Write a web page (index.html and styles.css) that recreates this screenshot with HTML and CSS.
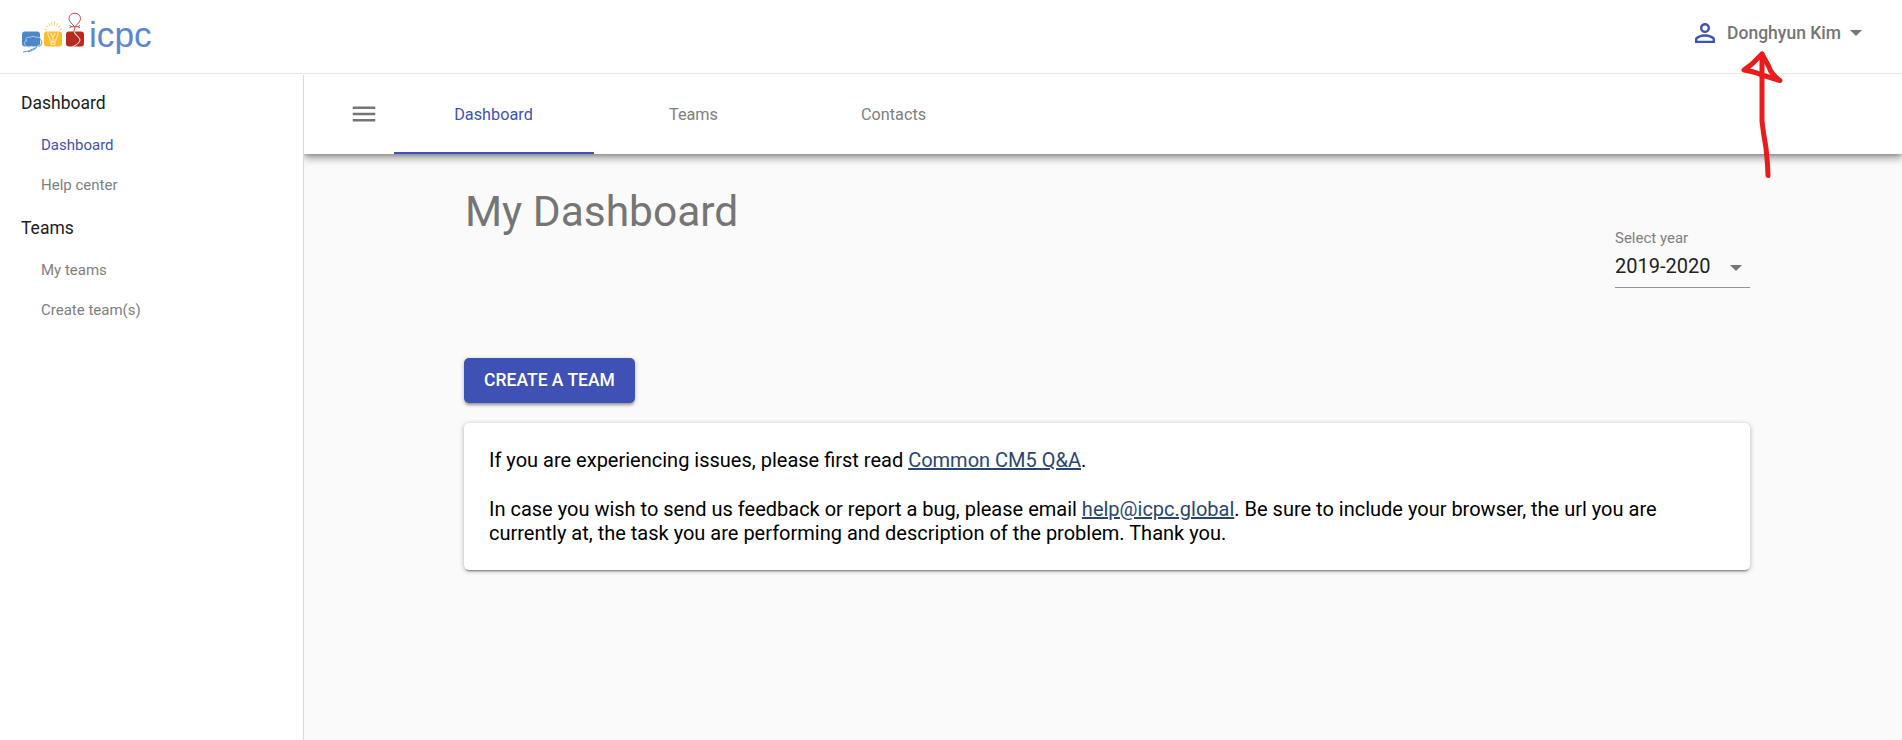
FILE: index.html
```html
<!DOCTYPE html>
<html lang="en">
<head>
<meta charset="utf-8">
<title>My Dashboard</title>
<link rel="stylesheet" href="styles.css">
</head>
<body>
<header class="topbar">
  <svg class="logo" width="140" height="56" viewBox="0 0 140 56" fill="none">
    <rect x="2" y="25.500" width="18" height="15" rx="3" fill="#4b86c6"/>
    <path d="M6 40C3.500 38 4 35 6.500 35C5 32 7.500 30.500 10 31.500C11 30 15 30 16 31.500C19 30.500 21.500 32 20.500 34C22.500 36 21 39.500 18 39.500C17 42 13 41.500 12 40C10 41.500 7 41.500 6 40Z" stroke="#b9d6f2" stroke-width=".9"/>
    <path d="M20.500 33.500C23 36 21.500 40 18.500 40.500M16 42C13 43.500 11 43 9.500 44.500C7.500 46 5 45 3 46.300M17 41C14 44 11 45 8 46" stroke="#5790cc" stroke-width="1"/>
    <rect x="24" y="25.500" width="18" height="15" rx="3" fill="#fdbb30"/>
    <path d="M31 35.500C30.500 32.500 27.500 31 27.800 26M35 35.500C35.500 32.500 38.500 31 38.200 26M31 36h4v2.500h-4zM30.500 27l2.500 4 2.500-4M33 31v6" stroke="#ffe9b4" stroke-width="1.100"/>
    <path d="M24.500 23l2.500 1.200M26 19.500l2.500 2M28.500 17l1.700 3M31.300 15.500l.7 4M34.700 15.500l-.5 4M38 17l-1.500 3M40.500 19.500l-2.400 2M42 23l-2.500 1.200" stroke="#fbcf78" stroke-width="1"/>
    <rect x="46" y="25.500" width="18" height="15" rx="3" fill="#b52b1d"/>
    <path d="M54.500 20.500C51 17 49 15 49 12.500C49 5.500 60.500 5.500 60.500 12.500C60.500 15 58.500 17 55 20.500L54 25.500M49.500 19.500l2 1.200-2 1.200M60 19.500l-2 1.200 2 1.200M51.500 20.700h6.500" stroke="#bd4840" stroke-width="1"/>
    <path d="M54 25.500C55 29.500 60 31 60 34C59.500 38 55.500 39.500 52 41" stroke="#f3cbc6" stroke-width="1.100"/>
    <text class="logo-text" x="69" y="41.300" textLength="62.500" lengthAdjust="spacingAndGlyphs">icpc</text>
  </svg>
  <div class="user">
    <svg width="30" height="30" viewBox="0 0 24 24" fill="#3f51b5"><path d="M12 5.900a2.100 2.100 0 1 1 0 4.200 2.100 2.100 0 0 1 0-4.200m0 9c2.970 0 6.100 1.460 6.100 2.100v1.100H5.900V17c0-.64 3.130-2.100 6.100-2.100M12 4C9.790 4 8 5.790 8 8s1.790 4 4 4 4-1.790 4-4-1.790-4-4-4zm0 9c-2.670 0-8 1.340-8 4v3h16v-3c0-2.660-5.330-4-8-4z"/></svg>
    <span class="user-name">Donghyun Kim</span>
    <span class="caret"></span>
  </div>
</header>
<div class="shell">
  <nav class="sidebar">
    <div class="group">Dashboard</div>
    <a class="item active">Dashboard</a>
    <a class="item">Help center</a>
    <div class="group">Teams</div>
    <a class="item">My teams</a>
    <a class="item">Create team(s)</a>
  </nav>
  <div class="content">
    <div class="tabs">
      <svg class="menu" width="30" height="30" viewBox="0 0 24 24" fill="#757575"><path d="M3 18h18v-2H3v2zm0-5h18v-2H3v2zm0-7v2h18V6H3z"/></svg>
      <a class="tab selected">Dashboard</a>
      <a class="tab">Teams</a>
      <a class="tab">Contacts</a>
    </div>
    <main class="page">
      <div class="heading">
        <h1 class="title">My Dashboard</h1>
        <div class="year">
          <span class="year-label">Select year</span>
          <div class="year-value"><span>2019-2020</span><span class="caret"></span></div>
        </div>
      </div>
      <button class="create">CREATE A TEAM</button>
      <section class="card">
        <p>If you are experiencing issues, please first read <a class="link">Common CM5 Q&amp;A</a>.</p>
        <p>In case you wish to send us feedback or report a bug, please email <a class="link">help@icpc.global</a>. Be sure to include your browser, the url you are<br>currently at, the task you are performing and description of the problem. Thank you.</p>
      </section>
    </main>
  </div>
</div>
<svg class="pointer" width="60" height="140" viewBox="0 0 60 140" fill="none" stroke="#e81c1c" stroke-width="5" stroke-linecap="round" stroke-linejoin="round">
  <path d="M28 125.500L27.500 114L26 98L23.500 83L22 71V4"/>
  <path d="M22 4L12 14L4 20Q12 21 22 25L40 30.500Q31 24 29 17Z"/>
</svg>
</body>
</html>
```
FILE: styles.css
```css
* { box-sizing: border-box; }
body {
  margin: 0;
  height: 740px;
  overflow: hidden;
  display: flex;
  flex-direction: column;
  font-family: Roboto, "Liberation Sans", sans-serif;
  color: #212121;
  background: #fff;
}
.topbar {
  flex: none;
  height: 74px;
  border-bottom: 1px solid #e8e8e8;
  display: flex;
  justify-content: space-between;
  align-items: flex-start;
  padding: 6px 40px 0 20px;
}
.logo-text {
  font-family: "Liberation Sans", sans-serif;
  font-size: 34.5px;
  fill: #5b87d2;
}
.user {
  display: flex;
  align-items: center;
  height: 30px;
  margin-top: 12px;
}
.user-name {
  margin: 0 9px 0 7px;
  font-size: 17.5px;
  font-weight: 500;
  line-height: 30px;
  color: #757575;
}
.caret {
  border: 6.25px solid transparent;
  border-top-color: #757575;
  border-bottom: 0;
}
.shell {
  flex: 1;
  display: flex;
  min-height: 0;
}
.sidebar {
  width: 304px;
  margin-top: 1px;
  padding-top: 7px;
  border-right: 1px solid #dadada;
}
.group {
  height: 45px;
  padding-left: 21px;
  font-size: 17.5px;
  line-height: 42px;
}
.item {
  display: block;
  height: 40px;
  padding-left: 41px;
  font-size: 15px;
  line-height: 36px;
  color: #808080;
}
.item.active { color: #3f51b5; }
.content {
  flex: 1;
  display: flex;
  flex-direction: column;
  background: #fafafa;
}
.tabs {
  flex: none;
  height: 80px;
  display: flex;
  align-items: stretch;
  padding-left: 45px;
  background: #fff;
  box-shadow: 0 4px 8px rgba(0, 0, 0, .4), 0 1px 3px rgba(0, 0, 0, .15);
  clip-path: inset(0 0 -20px 0);
}
.menu { align-self: center; margin-right: 15px; }
.tab {
  width: 200px;
  padding-right: 1px;
  text-align: center;
  font-size: 16.25px;
  line-height: 81px;
  color: #808080;
  border-bottom: 2px solid transparent;
}
.tab.selected { color: #3f51b5; border-color: #3f51b5; }
.page {
  width: 1286px;
  margin-left: 160px;
  display: flex;
  flex-direction: column;
}
.heading {
  display: flex;
  justify-content: space-between;
  height: 204px;
}
.title {
  margin: 33px 0 0 1px;
  font-size: 42.5px;
  font-weight: 400;
  line-height: 50px;
  color: #757575;
}
.year {
  width: 135px;
  height: 62px;
  margin-top: 72px;
  border-bottom: 1px solid #949494;
}
.year-label {
  display: block;
  font-size: 15px;
  line-height: 24px;
  color: #808080;
}
.year-value {
  display: flex;
  align-items: center;
  justify-content: space-between;
  padding-right: 8px;
  font-size: 20px;
  line-height: 33px;
}
.year-value .caret { position: relative; top: 1px; }
.create {
  align-self: flex-start;
  width: 171px;
  height: 45px;
  padding: 0 0 2px;
  border: 0;
  border-radius: 5px;
  background: #3f51b5;
  color: #fff;
  font: 500 17.5px Roboto, sans-serif;
  box-shadow: 0 3px 3px -1px rgba(0, 0, 0, .3), 0 1px 5px rgba(0, 0, 0, .2);
}
.card {
  height: 147px;
  margin-top: 20px;
  padding: 25px;
  border-radius: 5px;
  background: #fff;
  color: #000;
  font-size: 20px;
  line-height: 24px;
  box-shadow: 0 3px 2px -2px rgba(0, 0, 0, .4), 0 1px 5px rgba(0, 0, 0, .3);
}
.card p { margin: 0 0 25px; white-space: nowrap; }
.link {
  color: #2a4672;
  text-decoration: underline;
  text-decoration-thickness: 2px;
}
.pointer {
  position: absolute;
  left: 1740px;
  top: 50px;
}
```
